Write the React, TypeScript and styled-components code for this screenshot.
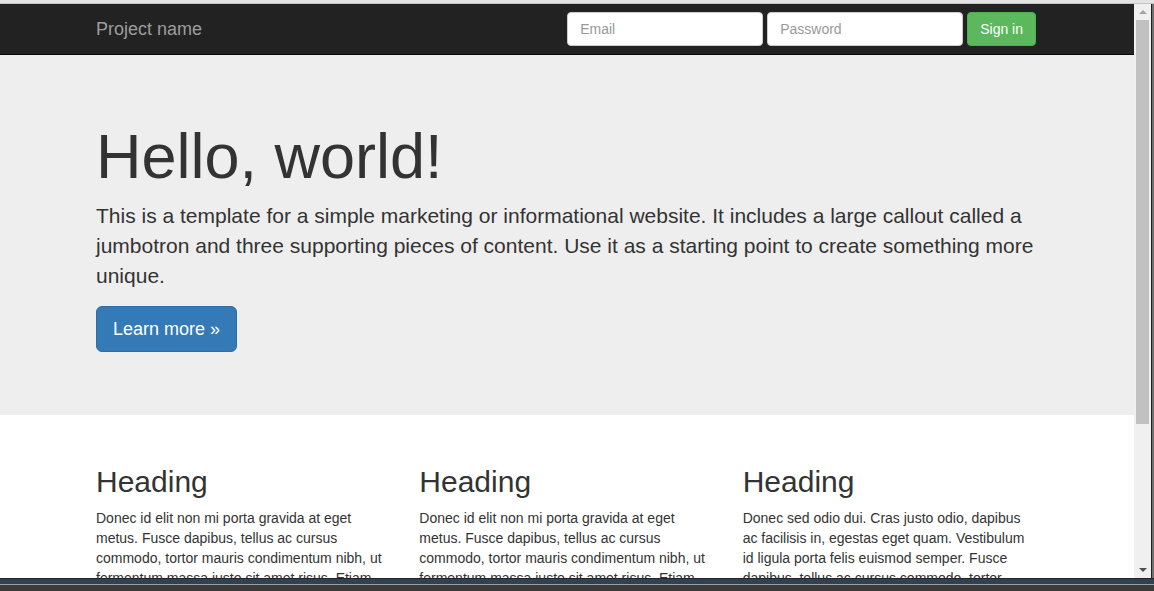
import styled, { createGlobalStyle } from "styled-components";

const GlobalStyle = createGlobalStyle`
  html, body {
    margin: 0;
    padding: 0;
    overflow: hidden;
  }
  body {
    font-family: "Liberation Sans", Arial, Helvetica, sans-serif;
    font-size: 14px;
    line-height: 1.42857143;
    color: #333;
    background: #fff;
  }
  * {
    box-sizing: border-box;
  }
`;

const Frame = styled.div`
  width: 1154px;
  height: 591px;
  display: flex;
  flex-direction: column;
  overflow: hidden;
`;

const TopEdge = styled.div`
  height: 4px;
  flex: none;
  background: #e3e3e3;
  border-bottom: 1px solid #c4c4c4;
`;

const Middle = styled.div`
  flex: 1;
  display: flex;
  min-height: 0;
`;

const Viewport = styled.div`
  flex: 1;
  overflow: hidden;
  background: #fff;
`;

const Scrollbar = styled.div`
  width: 17px;
  flex: none;
  background: #f0f0f0;
  display: flex;
  flex-direction: column;
  align-items: center;
  padding: 6px 0 6px;
`;

const Arrow = styled.div<{ $down?: boolean }>`
  width: 0;
  height: 0;
  border-left: 4px solid transparent;
  border-right: 4px solid transparent;
  ${(p) =>
    p.$down
      ? "border-top: 4px solid #505050; margin-top: auto;"
      : "border-bottom: 4px solid #a3a3a3;"}
`;

const Thumb = styled.div`
  width: 13px;
  height: 404px;
  margin-top: 6px;
  background: #c1c1c1;
`;

const RightEdge = styled.div`
  width: 3px;
  flex: none;
  border-left: 1px solid #1f1f1f;
  background: #707070;
`;

const BottomEdge = styled.div`
  height: 13px;
  flex: none;
  display: flex;
  flex-direction: column;
`;

const BottomBand = styled.div<{ $h: number; $c: string }>`
  height: ${(p) => p.$h}px;
  background: ${(p) => p.$c};
  flex: none;
`;

const Navbar = styled.nav`
  height: 51px;
  background: #222;
  border-bottom: 1px solid #080808;
`;

const Container = styled.div`
  width: 970px;
  margin-left: calc(50% - 486px);
  padding: 0 15px;
`;

const NavInner = styled(Container)`
  display: flex;
  align-items: flex-start;
  justify-content: space-between;
  height: 50px;
`;

const Brand = styled.a`
  display: block;
  height: 50px;
  padding: 15px 15px;
  margin-left: -15px;
  font-size: 18px;
  line-height: 20px;
  color: #9d9d9d;
  text-decoration: none;
`;

const SignInForm = styled.form`
  display: flex;
  gap: 4px;
  margin-top: 8px;
  padding: 0 15px;
  margin-right: -15px;
`;

const Field = styled.input`
  width: 196px;
  height: 34px;
  padding: 6px 12px;
  font-family: inherit;
  font-size: 14px;
  line-height: 1.42857143;
  color: #555;
  background: #fff;
  border: 1px solid #ccc;
  border-radius: 4px;
  &::placeholder {
    color: #999;
  }
`;

const Button = styled.button<{ $variant: "success" | "primary" | "default"; $size?: "lg" }>`
  display: inline-block;
  font-family: inherit;
  cursor: pointer;
  white-space: nowrap;
  border: 1px solid transparent;
  padding: ${(p) => (p.$size === "lg" ? "10px 16px" : "6px 12px")};
  font-size: ${(p) => (p.$size === "lg" ? "18px" : "14px")};
  line-height: ${(p) => (p.$size === "lg" ? "1.3333333" : "1.42857143")};
  border-radius: ${(p) => (p.$size === "lg" ? "6px" : "4px")};
  color: ${(p) => (p.$variant === "default" ? "#333" : "#fff")};
  background: ${(p) =>
    p.$variant === "success" ? "#5cb85c" : p.$variant === "primary" ? "#337ab7" : "#fff"};
  border-color: ${(p) =>
    p.$variant === "success" ? "#4cae4c" : p.$variant === "primary" ? "#2e6da4" : "#ccc"};
`;

const Jumbotron = styled.div`
  background: #eee;
  padding: 47px 0 48px;
  margin-bottom: 30px;
`;

const Title = styled.h1`
  margin: 20px 0 10px;
  font-size: 63px;
  font-weight: 500;
  line-height: 1.1;
  color: inherit;
`;

const Lead = styled.p`
  margin: 0 0 15px;
  font-size: 21px;
  line-height: 30px;
  font-weight: 200;
`;

const Row = styled(Container)`
  display: grid;
  grid-template-columns: repeat(3, 1fr);
  column-gap: 30px;
`;

const Heading = styled.h2`
  margin: 20px 0 10px;
  font-size: 30px;
  font-weight: 500;
  line-height: 1.1;
`;

const Text = styled.p`
  margin: 0 0 10px;
`;

const columns = [
  "Donec id elit non mi porta gravida at eget metus. Fusce dapibus, tellus ac cursus commodo, tortor mauris condimentum nibh, ut fermentum massa justo sit amet risus. Etiam porta sem malesuada magna mollis euismod. Donec sed odio dui.",
  "Donec id elit non mi porta gravida at eget metus. Fusce dapibus, tellus ac cursus commodo, tortor mauris condimentum nibh, ut fermentum massa justo sit amet risus. Etiam porta sem malesuada magna mollis euismod. Donec sed odio dui.",
  "Donec sed odio dui. Cras justo odio, dapibus ac facilisis in, egestas eget quam. Vestibulum id ligula porta felis euismod semper. Fusce dapibus, tellus ac cursus commodo, tortor mauris condimentum nibh, ut fermentum massa justo sit amet risus.",
];

export default function App() {
  return (
    <>
      <GlobalStyle />
      <Frame>
        <TopEdge />
        <Middle>
          <Viewport>
            <Navbar>
              <NavInner>
                <Brand href="#">Project name</Brand>
                <SignInForm onSubmit={(e) => e.preventDefault()}>
                  <Field type="text" placeholder="Email" />
                  <Field type="password" placeholder="Password" />
                  <Button type="submit" $variant="success">
                    Sign in
                  </Button>
                </SignInForm>
              </NavInner>
            </Navbar>
            <Jumbotron>
              <Container>
                <Title>Hello, world!</Title>
                <Lead>
                  This is a template for a simple marketing or informational website. It
                  includes a large callout called a jumbotron and three supporting pieces of
                  content. Use it as a starting point to create something more unique.
                </Lead>
                <Lead>
                  <Button $variant="primary" $size="lg">
                    Learn more &raquo;
                  </Button>
                </Lead>
              </Container>
            </Jumbotron>
            <Row>
              {columns.map((text, i) => (
                <div key={i}>
                  <Heading>Heading</Heading>
                  <Text>{text}</Text>
                  <p>
                    <Button $variant="default">View details &raquo;</Button>
                  </p>
                </div>
              ))}
            </Row>
          </Viewport>
          <Scrollbar>
            <Arrow />
            <Thumb />
            <Arrow $down />
          </Scrollbar>
          <RightEdge />
        </Middle>
        <BottomEdge>
          <BottomBand $h={1} $c="#1c252c" />
          <BottomBand $h={5} $c="#34414c" />
          <BottomBand $h={1} $c="#9aa0a5" />
          <BottomBand $h={6} $c="#3b3b3b" />
        </BottomEdge>
      </Frame>
    </>
  );
}
